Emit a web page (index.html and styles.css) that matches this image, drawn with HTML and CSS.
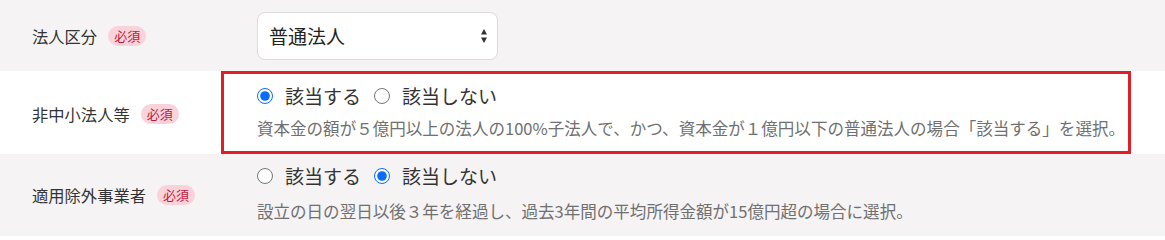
FILE: index.html
```html
<!DOCTYPE html>
<html lang="ja">
<head>
<meta charset="utf-8">
<title>法人区分</title>
<link rel="stylesheet" href="styles.css">
</head>
<body>
<div class="form">
  <div class="row row-grey row-1">
    <div class="label"><span class="label-text">法人区分</span><span class="badge">必須</span></div>
    <div class="field">
      <div class="select">
        <span class="select-value">普通法人</span>
        <svg class="select-arrow" width="6" height="14" viewBox="0 0 6 14"><path d="M3 0 L6 5.5 L0 5.5 Z M0 8.5 L6 8.5 L3 14 Z" fill="#333"/></svg>
      </div>
    </div>
  </div>
  <div class="row row-white row-2">
    <div class="label"><span class="label-text">非中小法人等</span><span class="badge">必須</span></div>
    <div class="field field-highlight">
      <div class="radios">
        <label class="radio"><input type="radio" name="r1" checked><span>該当する</span></label>
        <label class="radio"><input type="radio" name="r1"><span>該当しない</span></label>
      </div>
      <p class="help help-2">資本金の額が５億円以上の法人の100%子法人で、かつ、資本金が１億円以下の普通法人の場合「該当する」を選択。</p>
    </div>
  </div>
  <div class="row row-grey row-3">
    <div class="label"><span class="label-text">適用除外事業者</span><span class="badge">必須</span></div>
    <div class="field field-plain">
      <div class="radios">
        <label class="radio"><input type="radio" name="r2"><span>該当する</span></label>
        <label class="radio"><input type="radio" name="r2" checked><span>該当しない</span></label>
      </div>
      <p class="help help-3">設立の日の翌日以後３年を経過し、過去3年間の平均所得金額が15億円超の場合に選択。</p>
    </div>
  </div>
</div>
</body>
</html>
```

FILE: styles.css
```css
* { box-sizing: border-box; }
html, body {
  margin: 0;
  padding: 0;
  background: #ffffff;
}
body {
  font-family: "Noto Sans CJK JP", "Noto Sans", sans-serif;
  color: #333333;
  width: 1165px;
  height: 236px;
  overflow: hidden;
}
.form {
  display: flex;
  flex-direction: column;
}
.row {
  display: grid;
  grid-template-columns: 221px 910px 34px;
  align-items: center;
}
.row-grey { background: #f5f3f4; }
.row-white { background: #ffffff; }
.row-1 { height: 71px; }
.row-2 { height: 83px; align-items: stretch; }
.row-3 { height: 82px; align-items: stretch; }

.label {
  display: flex;
  align-items: center;
  padding-left: 32px;
  gap: 11px;
}
.row-2 .label { padding-top: 2px; }
.row-3 .label { padding-top: 0; }
.label-text {
  font-size: 16.3px;
  line-height: 22px;
  color: #333333;
}
.badge {
  display: inline-flex;
  align-items: center;
  justify-content: center;
  height: 20px;
  padding: 0 6px;
  border-radius: 10px;
  background: #f9d2da;
  color: #c01a3c;
  font-size: 13px;
  line-height: 20px;
}

.field {
  padding-left: 36px;
}
.select {
  width: 241px;
  height: 48px;
  background: #ffffff;
  border: 1px solid #dcdcdc;
  border-radius: 8px;
  display: flex;
  align-items: center;
  justify-content: space-between;
  padding: 0 10px 0 11px;
}
.select-value {
  font-size: 19px;
  line-height: 26px;
  color: #222222;
}
.select-arrow {
  display: block;
  width: 6px;
  height: 14px;
}

.field-highlight {
  border: 3px solid #e31d25;
  padding-left: 33px;
  padding-top: 8px;
}
.field-plain {
  padding-top: 8px;
}
.radios {
  display: flex;
  align-items: center;
  height: 28px;
}
.radio {
  display: inline-flex;
  align-items: center;
  margin-right: 13px;
  font-size: 19px;
  line-height: 28px;
  color: #333333;
}
.radio input {
  width: 16px;
  height: 16px;
  margin: 0 12px 0 0;
  accent-color: #0a6cff;
}
.help {
  margin: 0;
  font-size: 16.55px;
  line-height: 24px;
  color: #707070;
  white-space: nowrap;
}
.help-2 { margin-top: 6px; }
.help-3 { margin-top: 9px; }
```
